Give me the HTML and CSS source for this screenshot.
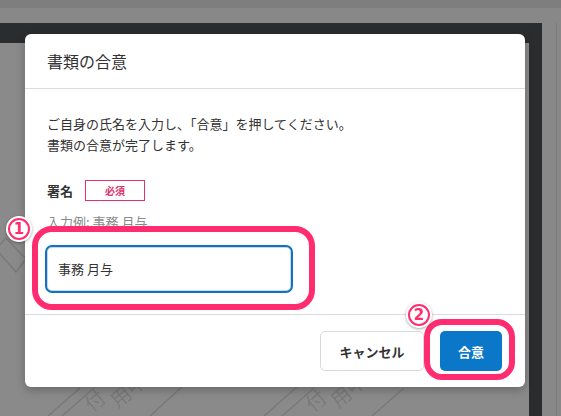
FILE: index.html
```html
<!DOCTYPE html>
<html lang="ja">
<head>
<meta charset="utf-8">
<title>書類の合意</title>
<link rel="stylesheet" href="styles.css">
</head>
<body>
<div class="app">
  <div class="topbar"></div>
  <div class="toolbar"></div>
  <div class="main">
    <div class="viewer">
      <div class="page">
        <svg class="watermark" width="529" height="373" viewBox="0 0 529 373">
          <g fill="none" stroke="rgba(0,0,0,0.12)" stroke-width="1.5">
            <path d="M-4 206 L6 195 L26 216 L16 229 Z"/>
            <path d="M48 373 L80 345"/>
            <path d="M62 373 L94 345"/>
            <path d="M150 373 L186 340"/>
            <path d="M264 373 L298 343"/>
            <path d="M282 373 L314 345"/>
            <path d="M372 373 L404 345"/>
          </g>
          <g fill="rgba(0,0,0,0.13)" font-family="Noto Sans CJK JP, sans-serif" font-size="20">
            <text x="92" y="370" transform="rotate(-40 92 370)">付</text>
            <text x="118" y="366" transform="rotate(-40 118 366)">用中</text>
            <text x="313" y="370" transform="rotate(-40 313 370)">付</text>
            <text x="338" y="366" transform="rotate(-40 338 366)">用中</text>
          </g>
        </svg>
      </div>
    </div>
    <div class="side"><div class="side-line"></div></div>
  </div>
</div>

<div class="modal">
  <div class="modal-header">書類の合意</div>
  <div class="modal-body">
    <p class="lead">ご自身の氏名を入力し、「合意」を押してください。<br>書類の合意が完了します。</p>
    <div class="field-label">
      <span class="label">署名</span>
      <span class="badge">必須</span>
    </div>
    <div class="hint">入力例: 事務 月与</div>
    <div class="input-wrap">
      <div class="input">事務 月与</div>
      <span class="anno anno-box"></span>
      <span class="num num-1">1</span>
    </div>
  </div>
  <div class="modal-footer">
    <button class="btn btn-cancel">キャンセル</button>
    <div class="ok-wrap">
      <button class="btn btn-ok">合意</button>
      <span class="anno anno-ok"></span>
      <span class="num num-2">2</span>
    </div>
  </div>
</div>
</body>
</html>
```

FILE: styles.css
```css
* { box-sizing: border-box; }
html, body {
  margin: 0;
  width: 561px;
  height: 416px;
  overflow: hidden;
  background: #898989;
  font-family: "Noto Sans CJK JP", "Noto Sans", sans-serif;
}
.app {
  display: flex;
  flex-direction: column;
  height: 416px;
}
.topbar { height: 8px; background: #7e7e7e; }
.toolbar { height: 15px; background: #888888; }
.main {
  flex: 1;
  display: flex;
}
.viewer {
  width: 542px;
  background: #2b2c2e;
  padding: 20px 13px 0 0;
  display: flex;
}
.page {
  flex: 1;
  background: #8a8a8a;
  position: relative;
  overflow: hidden;
}
.watermark { position: absolute; left: 0; top: 0; }
.side {
  flex: 1;
  background: #888888;
  display: flex;
  justify-content: flex-end;
  padding-right: 4px;
}
.side-line { width: 1px; background: #7c7c7c; }

.modal {
  position: absolute;
  left: 25px;
  top: 34px;
  width: 500px;
  height: 353px;
  background: #fff;
  border-radius: 6px;
  box-shadow: 0 3px 10px rgba(0,0,0,0.25);
  display: flex;
  flex-direction: column;
}
.modal-header {
  height: 55px;
  line-height: 54px;
  padding-left: 22px;
  font-size: 16px;
  color: #333;
  border-bottom: 1px solid #dcdcdc;
}
.modal-body {
  padding: 24px 22px 0 22px;
  height: 226px;
  border-bottom: 1px solid #dcdcdc;
}
.lead {
  margin: 0;
  font-size: 13px;
  line-height: 21px;
  color: #333;
}
.field-label {
  margin-top: 25px;
  display: flex;
  align-items: center;
  gap: 12px;
  height: 21px;
}
.label {
  font-size: 13px;
  font-weight: bold;
  color: #333;
}
.badge {
  width: 60px;
  height: 21px;
  border: 1px solid #e0326c;
  color: #e0326c;
  font-size: 10px;
  font-weight: bold;
  display: flex;
  align-items: center;
  justify-content: center;
}
.hint {
  margin-top: 12px;
  font-size: 13px;
  line-height: 18px;
  color: #8a8a8a;
}
.input-wrap {
  position: relative;
  margin-top: 14px;
  margin-left: -2px;
  width: 248px;
}
.input {
  height: 48px;
  border: 2px solid #0b74c6;
  border-radius: 7px;
  box-shadow: inset 0 0 0 1px #d4d4d4;
  padding-left: 11px;
  font-size: 13px;
  line-height: 44px;
  color: #333;
}
.anno {
  position: absolute;
  border: 6px solid #ff2d6f;
  border-radius: 20px;
}
.anno-box {
  left: -13px;
  top: -19px;
  width: 283px;
  height: 84px;
}
.num {
  position: absolute;
  width: 26px;
  height: 26px;
  border-radius: 50%;
  background: #fff;
  box-shadow: 0 1px 3px rgba(0,0,0,0.35);
  display: flex;
  align-items: center;
  justify-content: center;
  color: #ff2d6f;
  font-family: "DejaVu Sans", sans-serif;
  font-weight: bold;
  font-size: 15px;
  line-height: 1;
}
.num::before {
  content: "";
  position: absolute;
  left: 2px;
  top: 2px;
  width: 22px;
  height: 22px;
  border: 2.5px solid #ff2d6f;
  border-radius: 50%;
  box-sizing: border-box;
}
.num-1 { left: -39px; top: -29px; }
.modal-footer {
  flex: 1;
  display: flex;
  justify-content: flex-end;
  align-items: center;
  gap: 16px;
  padding: 0 23px 0 0;
}
.btn {
  height: 40px;
  border-radius: 5px;
  font-family: "Noto Sans CJK JP", sans-serif;
  font-size: 13px;
  font-weight: bold;
  cursor: pointer;
}
.btn-cancel {
  width: 104px;
  background: #fff;
  border: 1px solid #d9d9d9;
  color: #333;
}
.ok-wrap { position: relative; }
.btn-ok {
  display: block;
  width: 62px;
  background: #0a77c9;
  border: none;
  color: #fff;
}
.anno-ok {
  left: -16px;
  top: -12px;
  width: 91px;
  height: 61px;
  border-radius: 18px;
}
.num-2 { left: -34px; top: -29px; }
```
